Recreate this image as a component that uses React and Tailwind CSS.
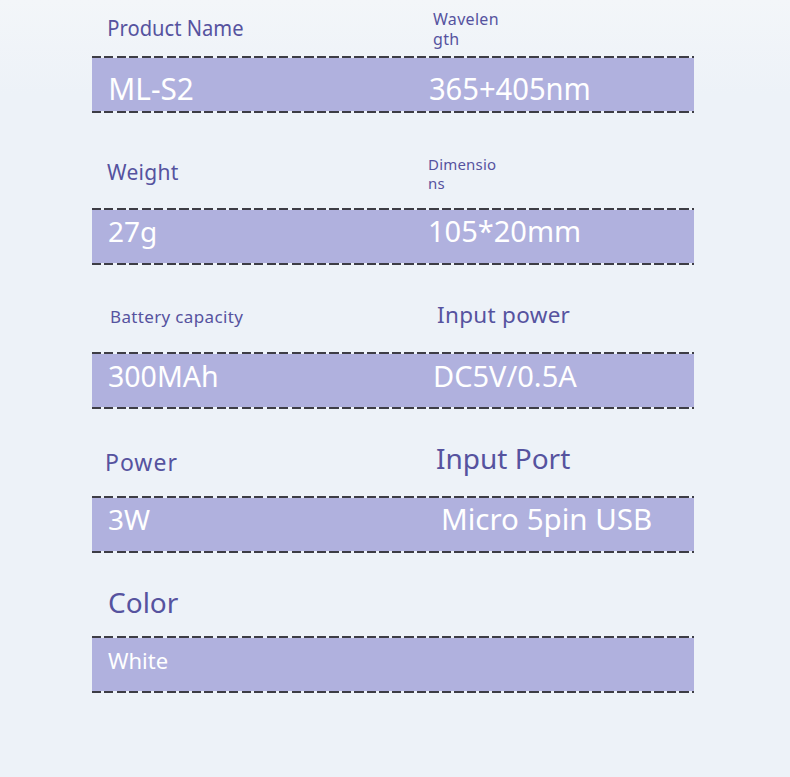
import React from "react";

// spec sheet rows: label area height, labels, band values
const rows = [
  {
    h: "h-[56px]",
    left: { text: "Product Name", cls: "pl-[16px] pt-[15px] text-[21px] leading-[26px] scale-x-[0.96] origin-left" },
    right: { text: ["Wavelen", "gth"], cls: "pl-[5px] pt-[9px] text-[16px] tracking-[0.3px] leading-[20px]" },
    values: [
      { text: "ML-S2", cls: "pl-[17px] text-[31px] scale-x-[0.96] origin-left" },
      { text: "365+405nm", cls: "pl-[1px] text-[31px] scale-x-[0.94] origin-left" },
    ],
    vcls: "pt-[11px]",
  },
  {
    h: "h-[95px]",
    left: { text: "Weight", cls: "pl-[15px] pt-[45px] text-[21px] tracking-[0.3px] leading-[28px]" },
    right: { text: ["Dimensio", "ns"], cls: "pl-0 pt-[42px] text-[15px] tracking-[0.2px] leading-[18.5px]" },
    values: [
      { text: "27g", cls: "pl-[16px] text-[28px]" },
      { text: "105*20mm", cls: "pl-0 text-[29px]" },
    ],
    vcls: "pt-[2px]",
  },
  {
    h: "h-[87px]",
    left: { text: "Battery capacity", cls: "pl-[18px] pt-[41px] text-[17px] tracking-[0.35px] leading-[22px]" },
    right: { text: "Input power", cls: "pl-[9px] pt-[35px] text-[22.5px] tracking-[0.3px] leading-[30px]" },
    values: [
      { text: "300MAh", cls: "pl-[16px] text-[28.5px]" },
      { text: "DC5V/0.5A", cls: "pl-[5px] text-[29px]" },
    ],
    vcls: "pt-[3px]",
  },
  {
    h: "h-[87px]",
    left: { text: "Power", cls: "pl-[13px] pt-[38px] text-[23px] tracking-[1px] leading-[30px]" },
    right: { text: "Input Port", cls: "pl-[8px] pt-[30px] text-[28px] leading-[38px]" },
    values: [
      { text: "3W", cls: "pl-[16px] text-[28px]" },
      { text: "Micro 5pin USB", cls: "pl-[13px] text-[29.5px]" },
    ],
    vcls: "pt-[2px]",
  },
  {
    h: "h-[83px]",
    left: { text: "Color", cls: "pl-[16px] pt-[30px] text-[28px] leading-[38px]" },
    right: null,
    values: [{ text: "White", cls: "pl-[16px] text-[22px]" }],
    vcls: "pt-[3px]",
  },
];

function Dashes() {
  return <div className="h-[2px] w-full bg-[repeating-linear-gradient(90deg,#3d3d45_0_9px,transparent_9px_12.5px)]" />;
}

function Label({ item, wide }) {
  if (!item) return <div />;
  const lines = Array.isArray(item.text) ? item.text : [item.text];
  return (
    <div className={`${wide ? "w-[336px]" : "flex-1"} shrink-0`}>
      <div className={`text-[#56539f] whitespace-nowrap ${item.cls}`}>
        {lines.map((l, i) => (
          <div key={i}>{l}</div>
        ))}
      </div>
    </div>
  );
}

export default function App() {
  return (
    <div
      className="w-[790px] h-[777px] overflow-hidden bg-[linear-gradient(180deg,#f3f6f9_0%,#edf2f8_12%,#edf2f8_100%)] pl-[92px]"
      style={{ fontFamily: '"Noto Sans", "Noto Sans CJK SC", sans-serif' }}
    >
      <div className="w-[602px]">
        {rows.map((r, i) => (
          <div key={i}>
            <div className={`flex ${r.h}`}>
              <Label item={r.left} wide />
              <Label item={r.right} />
            </div>
            <Dashes />
            <div className={`h-[53px] bg-[#b0b1de] flex text-white leading-[38px] ${r.vcls}`}>
              {r.values.map((v, j) => (
                <div key={j} className={j === 0 ? "w-[336px] shrink-0" : "flex-1"}>
                  <div className={`whitespace-nowrap ${v.cls}`}>{v.text}</div>
                </div>
              ))}
            </div>
            <Dashes />
          </div>
        ))}
      </div>
    </div>
  );
}
